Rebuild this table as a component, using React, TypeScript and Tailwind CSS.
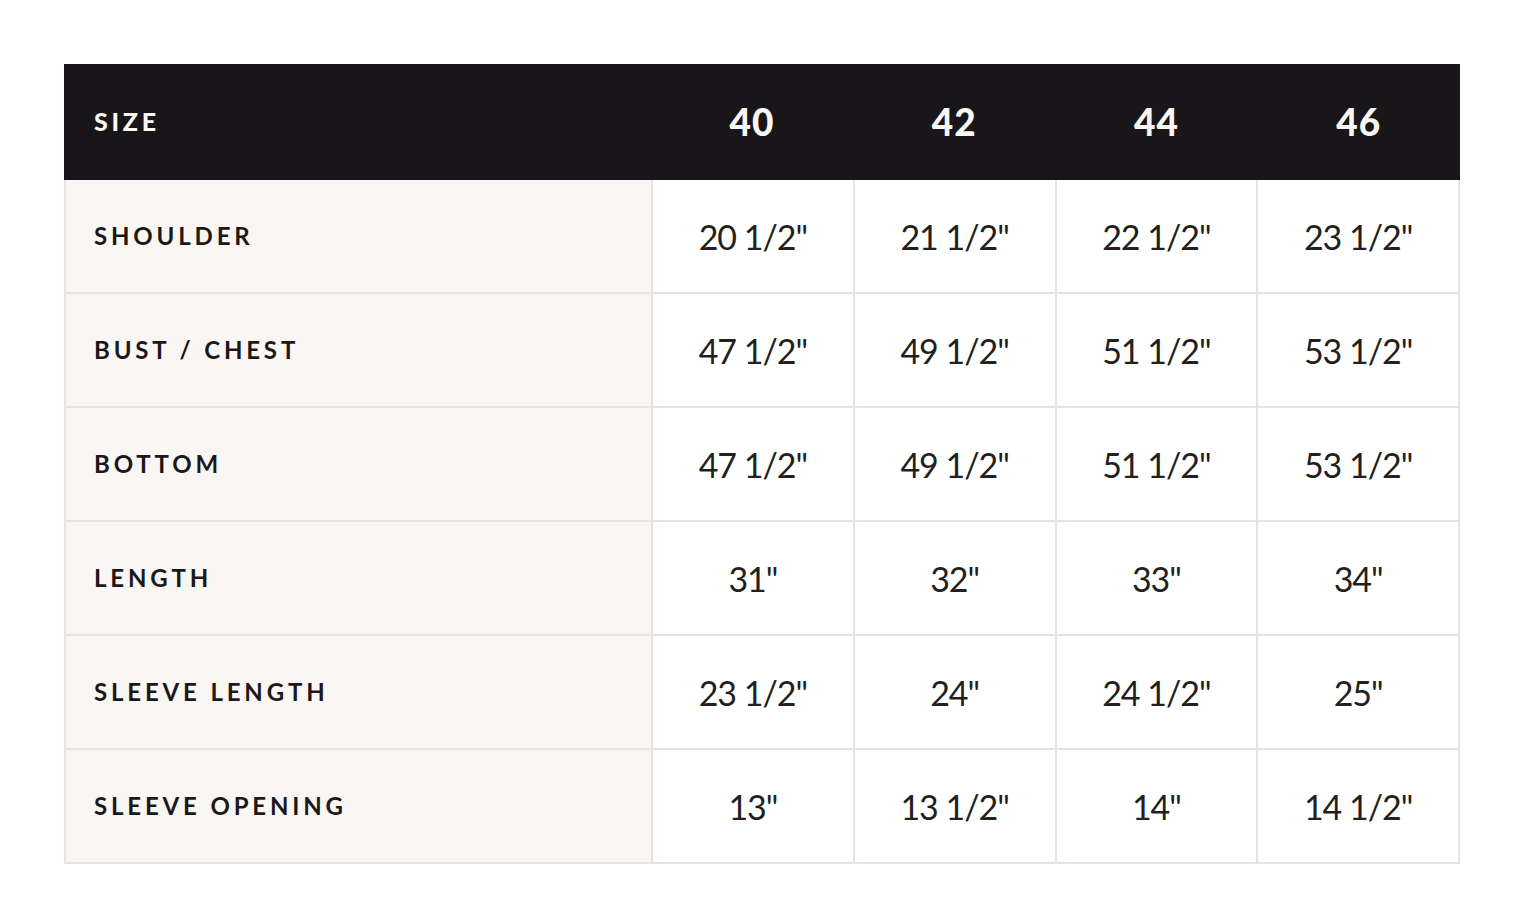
const sizes = ["40", "42", "44", "46"];

const rows: { label: string; values: string[] }[] = [
  { label: "SHOULDER", values: ['20 1/2"', '21 1/2"', '22 1/2"', '23 1/2"'] },
  { label: "BUST / CHEST", values: ['47 1/2"', '49 1/2"', '51 1/2"', '53 1/2"'] },
  { label: "BOTTOM", values: ['47 1/2"', '49 1/2"', '51 1/2"', '53 1/2"'] },
  { label: "LENGTH", values: ['31"', '32"', '33"', '34"'] },
  { label: "SLEEVE LENGTH", values: ['23 1/2"', '24"', '24 1/2"', '25"'] },
  { label: "SLEEVE OPENING", values: ['13"', '13 1/2"', '14"', '14 1/2"'] },
];

export default function App() {
  return (
    <div className="min-h-screen w-full bg-white px-16 pt-16 font-['Lato','Liberation_Sans',sans-serif]">
      <div className="w-[1396px]">
        <div className="grid h-[116px] grid-cols-[587px_repeat(4,1fr)] items-center bg-[#181619] text-[#faf6f3]">
          <div className="pl-[30px] text-[25px] font-black tracking-[0.15em]">SIZE</div>
          {sizes.map((s) => (
            <div key={s} className="pt-[-2px] text-center text-[37px] font-black tracking-[0.03em]">
              {s}
            </div>
          ))}
        </div>
        <div className="border-x-2 border-[#e7e4df]">
          {rows.map((row) => (
            <div
              key={row.label}
              className="grid h-[114px] grid-cols-[585px_repeat(4,1fr)] border-b-2 border-[#e7e4df]"
            >
              <div className="flex items-center bg-[#faf6f3] pl-[28px] text-[24px] font-bold tracking-[0.16em] text-[#1a1819]">
                {row.label}
              </div>
              {row.values.map((v, j) => (
                <div
                  key={j}
                  className="flex items-center justify-center border-l-2 border-[#e7e4df] bg-white text-[34px] tracking-[-0.03em] text-[#231f20]"
                >
                  {v}
                </div>
              ))}
            </div>
          ))}
        </div>
      </div>
    </div>
  );
}
